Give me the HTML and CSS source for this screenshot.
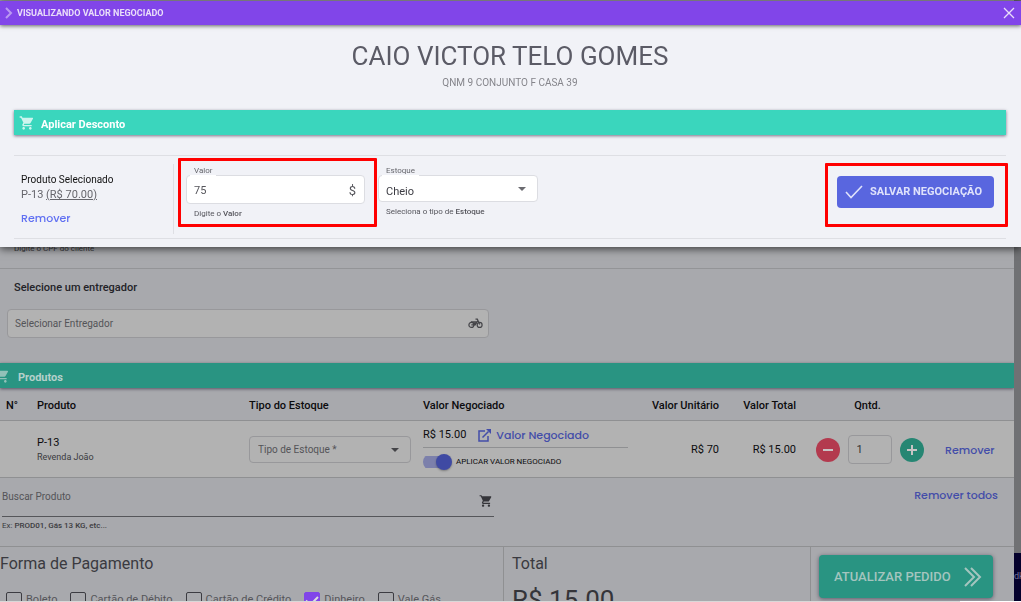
FILE: index.html
```html
<!DOCTYPE html>
<html lang="pt-BR">
<head>
<meta charset="utf-8">
<title>Visualizando valor negociado</title>
<meta name="viewport" content="width=device-width, initial-scale=1">
<link rel="stylesheet" href="styles.css">
</head>
<body>
<svg class="defs" aria-hidden="true">
  <symbol id="cart" viewBox="0 0 24 24"><path fill="currentColor" d="M7 18c-1.100 0-2 .9-2 2s.9 2 2 2 2-.9 2-2-.9-2-2-2zM1 2v2h2l3.600 7.600L5.200 14c-.2.300-.2.600-.2 1 0 1.100.9 2 2 2h12v-2H7.400c-.100 0-.2-.1-.2-.2L8.100 13h7.500c.7 0 1.400-.4 1.700-1l3.600-6.500c.5-.9-.1-1.500-.9-1.500H5.200L4.300 2H1zm16 16c-1.100 0-2 .9-2 2s.9 2 2 2 2-.9 2-2-.9-2-2-2z"/></symbol>
</svg>
<div class="app">
  <main class="page">
    <p class="cpf-hint hint">Digite o CPF do cliente</p>
    <section class="courier">
      <label class="courier-title" for="courier">Selecione um entregador</label>
      <div class="courier-box">
        <input id="courier" type="text" placeholder="Selecionar Entregador">
        <svg width="15" height="11" viewBox="0 0 16 12" fill="none" stroke="currentColor" stroke-width="1.300"><circle cx="3.500" cy="7.500" r="2.700"/><circle cx="12.500" cy="7.500" r="2.700"/><path d="M3.500 7.500h4L10.500 3M3 4.200h6.500M8 1.200h2l2.500 6"/><path d="M5 4.500h5L8 8H6z" fill="currentColor" stroke="none"/></svg>
      </div>
    </section>
    <h2 class="bar bar-dim"><svg width="16" height="16"><use href="#cart"/></svg>Produtos</h2>
    <table class="products">
      <colgroup><col class="c-num"><col><col class="c-stock"><col class="c-deal"><col class="c-unit"><col class="c-total"><col class="c-qty"><col class="c-act"></colgroup>
      <thead>
        <tr><th>N°</th><th>Produto</th><th>Tipo do Estoque</th><th>Valor Negociado</th><th class="num">Valor Unitário</th><th class="num">Valor Total</th><th class="mid">Qntd.</th><th></th></tr>
      </thead>
      <tbody>
        <tr>
          <td></td>
          <td><div class="prod-name">P-13</div><div class="prod-store">Revenda João</div></td>
          <td><div class="select select-row"><select aria-label="Tipo de Estoque"><option>Tipo de Estoque *</option></select></div></td>
          <td>
            <div class="deal-line"><span>R$ 15.00</span>
              <a class="link deal-link" href="#"><svg width="13" height="13" viewBox="0 0 13 13" fill="none" stroke="currentColor" stroke-width="1.500"><path d="M7 2H1v10h9V7M4.500 8.500l6-6"/><path d="M8 0h5v5z" fill="currentColor" stroke="none"/></svg>Valor Negociado</a>
            </div>
            <label class="switch"><input type="checkbox" role="switch" checked>APLICAR VALOR NEGOCIADO</label>
          </td>
          <td class="num">R$ 70</td>
          <td class="num">R$ 15.00</td>
          <td>
            <div class="qty">
              <button class="round minus" aria-label="Diminuir"><svg width="10" height="10" viewBox="0 0 10 10" stroke="currentColor" stroke-width="2"><path d="M0 5h10"/></svg></button>
              <input type="text" value="1" aria-label="Quantidade">
              <button class="round plus" aria-label="Aumentar"><svg width="10" height="10" viewBox="0 0 10 10" stroke="currentColor" stroke-width="2"><path d="M0 5h10M5 0v10"/></svg></button>
            </div>
          </td>
          <td><a class="link row-remove" href="#">Remover</a></td>
        </tr>
      </tbody>
    </table>
    <section class="search">
      <div class="search-field">
        <div class="search-box">
          <input type="text" placeholder="Buscar Produto" aria-label="Buscar Produto">
          <svg width="14" height="14"><use href="#cart"/></svg>
        </div>
        <p class="hint">Ex: <b>PROD01, Gás 13 KG, etc...</b></p>
      </div>
      <a class="link" href="#">Remover todos</a>
    </section>
    <section class="checkout">
      <div class="payment">
        <h3>Forma de Pagamento</h3>
        <div class="options">
          <label><input type="checkbox">Boleto</label>
          <label><input type="checkbox">Cartão de Débito</label>
          <label><input type="checkbox">Cartão de Crédito</label>
          <label><input type="checkbox" checked>Dinheiro</label>
          <label><input type="checkbox">Vale Gás</label>
        </div>
      </div>
      <div class="total"><h3>Total</h3><p>R$ 15.00</p></div>
      <div class="update">
        <button class="update-btn">ATUALIZAR PEDIDO<svg width="18" height="20" viewBox="0 0 18 20" fill="none" stroke="currentColor" stroke-width="2"><path d="M1 1l9 9-9 9M7 1l9 9-9 9"/></svg></button>
      </div>
    </section>
  </main>
  <aside class="edge"><div class="edge-foot">dk</div></aside>
</div>
<div class="progress"></div>

<div class="modal" role="dialog" aria-labelledby="dlg">
  <header class="modal-head">
    <svg class="chev" width="8" height="12" viewBox="0 0 8 12" fill="none" stroke="currentColor" stroke-width="2"><path d="M1 1l5 5-5 5"/></svg>
    <h1 id="dlg">VISUALIZANDO VALOR NEGOCIADO</h1>
    <button class="close" aria-label="Fechar"><svg width="12" height="12" viewBox="0 0 12 12" stroke="currentColor" stroke-width="1.300"><path d="M1 1l10 10M11 1L1 11"/></svg></button>
  </header>
  <div class="modal-body">
    <p class="client">CAIO VICTOR TELO GOMES</p>
    <p class="address">QNM 9 CONJUNTO F CASA 39</p>
    <h2 class="bar"><svg width="16" height="16"><use href="#cart"/></svg>Aplicar Desconto</h2>
    <form class="discount">
      <div class="selected">
        <strong>Produto Selecionado</strong>
        <span>P-13 <u>(R$ 70.00)</u></span>
        <a class="link" href="#">Remover</a>
      </div>
      <div class="field marked mark-value">
        <label for="value">Valor</label>
        <div class="value-box"><input id="value" type="text" value="75"><span>$</span></div>
        <p class="hint">Digite o <b>Valor</b></p>
      </div>
      <div class="field field-stock">
        <label for="stock">Estoque</label>
        <div class="select"><select id="stock"><option>Cheio</option></select></div>
        <p class="hint">Seleciona o tipo de <b>Estoque</b></p>
      </div>
      <div class="save marked mark-save">
        <button type="button" class="save-btn"><svg width="18" height="14" viewBox="0 0 18 14" fill="none" stroke="currentColor" stroke-width="1.600"><path d="M1 7l5 5.500L17 1"/></svg>SALVAR NEGOCIAÇÃO</button>
      </div>
    </form>
  </div>
</div>
</body>
</html>
```
FILE: styles.css
```css
* { box-sizing: border-box; }
body {
  margin: 0;
  height: 100vh;
  overflow: hidden;
  display: flex;
  flex-direction: column;
  font: 11px/14px Roboto, "Liberation Sans", sans-serif;
  color: #1c1c20;
  background: #26806f;
}
h1, h2, h3, p { margin: 0; font-weight: 400; }
input, select, button { font: inherit; color: inherit; margin: 0; padding: 0; border: 0; background: none; min-width: 0; }
button { cursor: pointer; }
svg { flex: none; }
.defs { position: absolute; width: 0; height: 0; }
.link { font: 500 11px/16px Poppins, Inter, sans-serif; color: #6070f2; text-decoration: none; }
.hint { font-size: 8px; line-height: 10px; color: #55555c; }
.hint b { font-weight: 500; }

.bar {
  display: flex;
  align-items: center;
  gap: 6px;
  height: 25px;
  padding: 4px 5px 0;
  font-size: 11px;
  font-weight: 700;
  color: #fff;
  background: #3ad6bd;
  box-shadow: 0 1px 3px rgba(20, 10, 40, .55);
}
.bar svg { opacity: .75; margin-bottom: 4px; }

/* Order page under the dialog */
.app { flex: 1; min-height: 0; display: flex; background: #707174; }
.page { flex: 1; min-width: 0; overflow: hidden; padding-top: 244px; background: #a8a9ad; }
.page .hint { color: #3b3b40; }
.page .link { color: #434da9; }
.page .cpf-hint { height: 25px; padding-left: 14px; border-bottom: 1px solid #939497; }
.courier { padding: 11px 7px 25px; }
.courier-title { display: block; padding-left: 7px; margin-bottom: 14px; line-height: 15px; font-weight: 500; color: #232328; }
.courier-box {
  display: flex;
  align-items: center;
  width: 482px;
  max-width: 100%;
  height: 29px;
  padding: 0 5px 0 7px;
  border: 1px solid #98989b;
  border-radius: 4px;
  background: #b2b2b2;
  color: #454549;
}
.courier-box input, .search-box input { flex: 1; font-size: 10px; }
.page ::placeholder { color: #545458; opacity: 1; }
.bar-dim { background: #299482; color: #b5d0cb; padding-left: 0; gap: 8px; }
.bar-dim svg { margin-left: -6px; }

.products { width: 100%; table-layout: fixed; border-collapse: collapse; color: #0c0c0e; }
.c-num { width: 37px; }
.c-stock { width: 174px; }
.c-deal { width: 205px; }
.c-unit { width: 91px; }
.c-total { width: 77px; }
.c-qty { width: 147px; }
.c-act { width: 71px; }
.products th { height: 32px; padding: 5px 0 0; text-align: left; font-size: 11px; font-weight: 500; border-bottom: 1px solid #8f9092; }
.products th:first-child { padding-left: 6px; }
.products td { height: 57px; padding: 2px 0 0; border-bottom: 1px solid #8f9092; background: #b2b2b2; }
.products .num { text-align: right; }
.products .mid { text-align: center; padding-right: 4px; }
.prod-name { line-height: 15px; }
.prod-store { font-size: 9px; color: #3a3a3e; }
.select { display: grid; align-items: center; height: 27px; border: 1px solid #dcdde2; border-radius: 4px; background: #fff; }
.select > select { grid-area: 1 / 1; appearance: none; width: 100%; height: 100%; padding-left: 7px; border-radius: 4px; outline: 0; color: #3c3c43; }
.select::after { content: ""; grid-area: 1 / 1; justify-self: end; margin-right: 11px; border: 4px solid transparent; border-top-color: #6b6b70; border-bottom: 0; pointer-events: none; }
.select-row { width: 162px; border-color: #98989b; background: none; }
.select-row > select { color: #545458; font-size: 10px; padding-left: 8px; }
.select-row::after { border-top-color: #444448; }
.deal-line { display: flex; align-items: center; gap: 12px; height: 25px; border-bottom: 1px solid #8f9092; }
.deal-link { display: flex; align-items: center; gap: 5px; }
.switch { display: flex; align-items: center; gap: 4px; height: 28px; font-size: 8px; }
.switch input { appearance: none; display: flex; justify-content: flex-end; align-items: center; width: 29px; height: 16px; background: linear-gradient(#7c80ab, #7c80ab) 0 2px / 26px 12px no-repeat; border-radius: 8px; }
.switch input::before { content: ""; width: 16px; height: 16px; border-radius: 50%; background: #3f4aa3; box-shadow: 0 1px 2px rgba(0, 0, 0, .3); }
.qty { display: flex; justify-content: center; align-items: center; gap: 8px; }
.qty input { width: 44px; height: 29px; padding-left: 8px; border: 1px solid #98989b; border-radius: 4px; color: #333; }
.round { width: 24px; height: 24px; display: grid; place-items: center; border-radius: 50%; color: #c9c4c5; }
.minus { background: #b33a4e; }
.plus { background: #268673; }
.row-remove { display: block; padding-left: 2px; }

.search { display: flex; justify-content: space-between; align-items: flex-start; height: 69px; padding: 9px 16px 0 2px; border-bottom: 1px solid #8f9092; }
.search-field { width: 492px; }
.search-box { display: flex; align-items: flex-start; height: 30px; padding-right: 1px; border-bottom: 1px solid #55565a; color: #35353a; }
.search-box input { height: 20px; }
.search-box svg { margin-top: 7px; }
.search-field .hint { margin-top: 4px; }
.checkout { display: grid; grid-template-columns: 504px 1fr 203px; height: 100px; }
.checkout > div { padding-top: 8px; }
.checkout h3 { font-size: 16px; line-height: 18px; color: #3a3a40; }
.payment, .total { border-right: 1px solid #8f9092; }
.total { padding-left: 8px; }
.total p { margin-top: 12px; font-size: 26px; line-height: 30px; color: #35353a; }
.options { display: flex; gap: 13px; margin-top: 19px; padding-left: 6px; color: #55555a; }
.options label { display: flex; align-items: center; gap: 4px; }
.options input { appearance: none; width: 16px; height: 16px; border: 1px solid #3c3c42; border-radius: 2px; }
.options input:checked { display: grid; place-items: center; border-color: #8145e9; background: #8145e9; }
.options input:checked::before { content: ""; width: 10px; height: 5px; border: solid #ddd; border-width: 0 0 2px 2px; rotate: -45deg; }
.update { padding-left: 8px; padding-right: 21px; }
.update-btn { display: flex; justify-content: space-between; align-items: center; width: 100%; height: 43px; padding: 2px 11px 0 15px; border-radius: 4px; background: #299482; color: #a4c5bf; font-size: 13px; font-weight: 500; box-shadow: 0 1px 4px rgba(20, 10, 40, .5); }
.edge { width: 7px; overflow: hidden; display: flex; flex-direction: column; justify-content: flex-end; }
.edge-foot { height: 48px; padding-top: 16px; background: #04002c; color: #77779a; font-size: 9px; }
.progress { height: 1px; background: linear-gradient(to right, #d8d8d8 94%, #fff 94%); }

/* Dialog */
.modal { position: fixed; inset: 1px 0 auto; background: #f1f2f7; box-shadow: 0 2px 8px rgba(0, 0, 0, .65); }
.modal-head { display: flex; align-items: center; height: 24px; padding: 0 6px 0 5px; gap: 4px; color: #e9def9; background: #8145e9; box-shadow: 0 1px 4px rgba(0, 0, 0, .6); }
.modal-head h1 { flex: 1; font-size: 9px; font-weight: 700; }
.chev { opacity: .55; }
.close { display: grid; }
.modal-body { padding: 15px 15px 8px 14px; }
.client { text-align: center; font-size: 26px; line-height: 32px; color: #5b5b66; }
.address { margin: 4px 0 20px; text-align: center; font-size: 10px; color: #85858b; }
.discount { display: flex; align-items: flex-start; margin-top: 20px; height: 84px; border: solid #dedfe4; border-width: 1px 0; }
.selected { display: flex; flex-direction: column; align-items: flex-start; width: 160px; height: 70px; margin-top: 8px; padding: 8px 0 0 7px; line-height: 15px; border-right: 1px solid #dedfe4; color: #66666c; }
.selected strong { font-size: 10px; font-weight: 400; color: #111; }
.selected .link { margin-top: 8px; }
.field { width: 179px; margin-left: 12px; padding-top: 10px; }
.field label { display: table; position: relative; margin-left: 4px; padding: 0 4px; font-size: 8px; line-height: 9px; color: #66666c; }
.field label::after { content: ""; position: absolute; top: 9px; left: 0; right: 0; height: 1px; background: #fff; }
.field .hint { margin: 5px 0 0 8px; }
.value-box { display: flex; align-items: center; height: 29px; padding: 2px 8px 0 7px; border: 1px solid #dcdde2; border-radius: 4px; background: #fff; color: #55555b; }
.value-box input { flex: 1; }
.value-box span { font-size: 13px; }
.field-stock { width: 160px; margin-left: 13px; }
.field-stock select { padding-top: 6px; }
.marked { position: relative; }
.marked::after { content: ""; position: absolute; border: 3px solid #f00; border-radius: 1px; pointer-events: none; }
.mark-value::after { inset: 2px -12px -8px -8px; }
.save { margin: 20px 12px 0 auto; }
.mark-save::after { inset: -13px -14px -19px -12px; }
.save-btn { display: flex; align-items: center; gap: 7px; height: 32px; padding: 0 12px 0 8px; border-radius: 4px; background: #5966df; color: #dfe2fb; font-size: 11px; font-weight: 700; }
```
